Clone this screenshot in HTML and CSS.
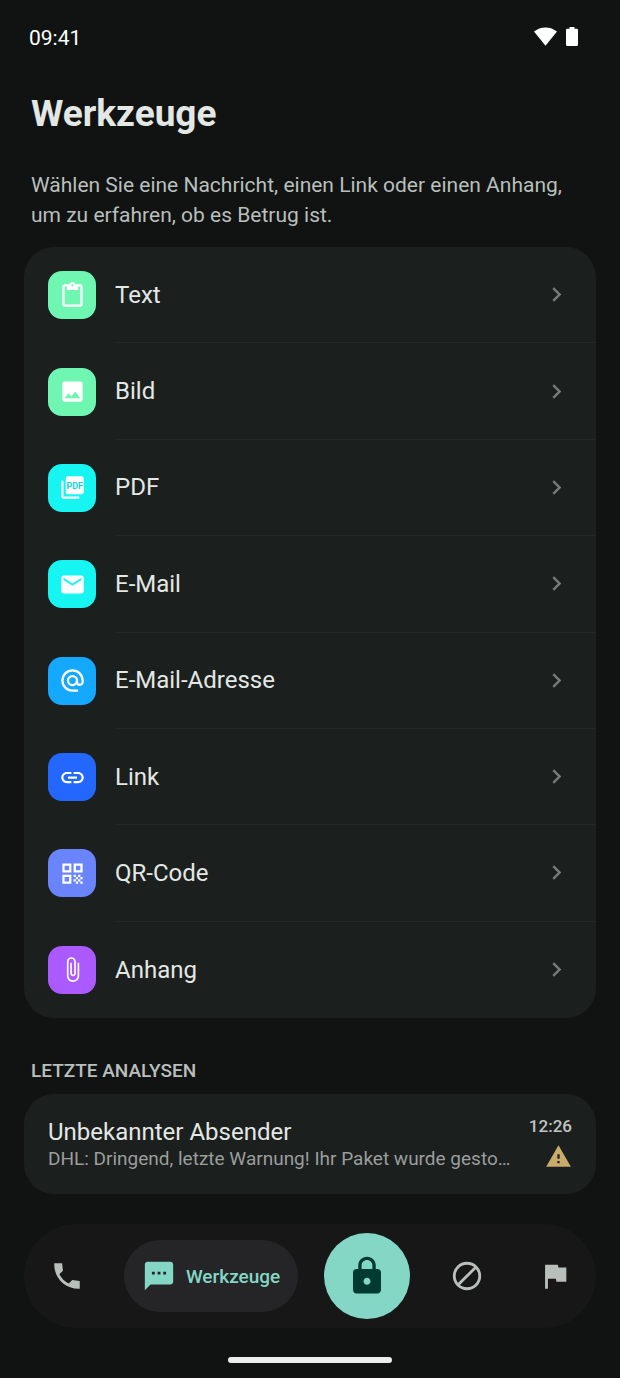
FILE: index.html
```
<!DOCTYPE html>
<html lang="de">
<head>
    <meta charset="UTF-8">
    <meta name="viewport" content="width=device-width, initial-scale=1.0">
    <title>Werkzeuge</title>
    <link rel="stylesheet" href="styles.css">
</head>
<body>
    <header class="status-bar">
        <time>09:41</time>
        <div class="status-icons">
            <svg class="wifi" viewBox="0 0 23 19" aria-hidden="true"><path d="M0 4.6C3.2 1.9 7 .4 11.5.4S19.8 1.9 23 4.6L11.5 18.8z"/></svg>
            <svg class="battery" viewBox="0 0 12 19" aria-hidden="true"><path d="M3.5 0h5v1.8h2.3c.7 0 1.2.5 1.2 1.2v14.8c0 .7-.5 1.2-1.2 1.2H1.2C.5 19 0 18.5 0 17.8V3c0-.7.5-1.2 1.2-1.2h2.3z"/></svg>
        </div>
    </header>

    <main class="content">
        <h1 class="title">Werkzeuge</h1>
        <p class="intro">Wählen Sie eine Nachricht, einen Link oder einen Anhang, um zu erfahren, ob es Betrug ist.</p>

        <!-- Werkzeugliste -->
        <nav class="tool-list" aria-label="Werkzeuge">
            <a href="#text" class="tool">
                <span class="tile mint">
                    <svg viewBox="0 0 24 24" aria-hidden="true"><path d="M19 2h-4.18C14.4.84 13.3 0 12 0S9.6.84 9.18 2H5c-1.1 0-2 .9-2 2v16c0 1.1.9 2 2 2h14c1.1 0 2-.9 2-2V4c0-1.1-.9-2-2-2zm-7 0c.55 0 1 .45 1 1s-.45 1-1 1-1-.45-1-1 .45-1 1-1zm7 18H5V4h2v3h10V4h2v16z"/></svg>
                </span>
                <span class="tool-body">Text <svg class="chevron" viewBox="0 0 24 24" aria-hidden="true"><path d="M10 6 8.59 7.41 13.17 12l-4.58 4.59L10 18l6-6z"/></svg></span>
            </a>
            <a href="#bild" class="tool">
                <span class="tile mint">
                    <svg viewBox="0 0 24 24" aria-hidden="true"><path d="M21 19V5c0-1.1-.9-2-2-2H5c-1.1 0-2 .9-2 2v14c0 1.1.9 2 2 2h14c1.1 0 2-.9 2-2zM8.5 13.5l2.5 3.01L14.5 12l4.5 6H5l3.5-4.5z"/></svg>
                </span>
                <span class="tool-body">Bild <svg class="chevron" viewBox="0 0 24 24" aria-hidden="true"><path d="M10 6 8.59 7.41 13.17 12l-4.58 4.59L10 18l6-6z"/></svg></span>
            </a>
            <a href="#pdf" class="tool">
                <span class="tile cyan">
                    <svg viewBox="0 0 24 24" aria-hidden="true"><path d="M8 2h12a2 2 0 0 1 2 2v12a2 2 0 0 1-2 2H8a2 2 0 0 1-2-2V4a2 2 0 0 1 2-2zM4 6H2v14c0 1.1.9 2 2 2h14v-2H4z"/><text class="pdf-text" x="14" y="13">PDF</text></svg>
                </span>
                <span class="tool-body">PDF <svg class="chevron" viewBox="0 0 24 24" aria-hidden="true"><path d="M10 6 8.59 7.41 13.17 12l-4.58 4.59L10 18l6-6z"/></svg></span>
            </a>
            <a href="#email" class="tool">
                <span class="tile cyan">
                    <svg viewBox="0 0 24 24" aria-hidden="true"><path d="M20 4H4c-1.1 0-1.99.9-1.99 2L2 18c0 1.1.9 2 2 2h16c1.1 0 2-.9 2-2V6c0-1.1-.9-2-2-2zm0 4-8 5-8-5V6l8 5 8-5v2z"/></svg>
                </span>
                <span class="tool-body">E-Mail <svg class="chevron" viewBox="0 0 24 24" aria-hidden="true"><path d="M10 6 8.59 7.41 13.17 12l-4.58 4.59L10 18l6-6z"/></svg></span>
            </a>
            <a href="#adresse" class="tool">
                <span class="tile sky">
                    <svg class="line-icon" viewBox="0 0 24 24" aria-hidden="true"><circle cx="12" cy="12" r="4"/><path d="M17 21h-5a9 9 0 1 1 9-9v1.4a2.5 2.5 0 0 1-5 0V12"/></svg>
                </span>
                <span class="tool-body">E-Mail-Adresse <svg class="chevron" viewBox="0 0 24 24" aria-hidden="true"><path d="M10 6 8.59 7.41 13.17 12l-4.58 4.59L10 18l6-6z"/></svg></span>
            </a>
            <a href="#link" class="tool">
                <span class="tile blue">
                    <svg viewBox="0 0 24 24" aria-hidden="true"><path d="M3.9 12c0-1.71 1.39-3.1 3.1-3.1h4V7H7c-2.76 0-5 2.24-5 5s2.24 5 5 5h4v-1.9H7c-1.71 0-3.1-1.39-3.1-3.1zM8 13h8v-2H8v2zm9-6h-4v1.9h4c1.71 0 3.1 1.39 3.1 3.1s-1.39 3.1-3.1 3.1h-4V17h4c2.76 0 5-2.24 5-5s-2.24-5-5-5z"/></svg>
                </span>
                <span class="tool-body">Link <svg class="chevron" viewBox="0 0 24 24" aria-hidden="true"><path d="M10 6 8.59 7.41 13.17 12l-4.58 4.59L10 18l6-6z"/></svg></span>
            </a>
            <a href="#qr" class="tool">
                <span class="tile indigo">
                    <svg viewBox="0 0 24 24" aria-hidden="true"><path d="M3 11h8V3H3v8zm2-6h4v4H5V5zM3 21h8v-8H3v8zm2-6h4v4H5v-4zM13 3v8h8V3h-8zm6 6h-4V5h4v4zM19 19h2v2h-2zM13 13h2v2h-2zM15 15h2v2h-2zM13 17h2v2h-2zM15 19h2v2h-2zM17 17h2v2h-2zM17 13h2v2h-2zM19 15h2v2h-2z"/></svg>
                </span>
                <span class="tool-body">QR-Code <svg class="chevron" viewBox="0 0 24 24" aria-hidden="true"><path d="M10 6 8.59 7.41 13.17 12l-4.58 4.59L10 18l6-6z"/></svg></span>
            </a>
            <a href="#anhang" class="tool">
                <span class="tile purple">
                    <svg viewBox="0 0 24 24" aria-hidden="true"><path d="M16.5 6v11.5c0 2.21-1.79 4-4 4s-4-1.79-4-4V5c0-1.38 1.12-2.5 2.5-2.5s2.5 1.12 2.5 2.5v10.5c0 .55-.45 1-1 1s-1-.45-1-1V6H10v9.5c0 1.38 1.12 2.5 2.5 2.5s2.5-1.12 2.5-2.5V5c0-2.21-1.79-4-4-4S7 2.79 7 5v12.5c0 3.04 2.46 5.5 5.5 5.5s5.5-2.46 5.5-5.5V6h-1.5z"/></svg>
                </span>
                <span class="tool-body">Anhang <svg class="chevron" viewBox="0 0 24 24" aria-hidden="true"><path d="M10 6 8.59 7.41 13.17 12l-4.58 4.59L10 18l6-6z"/></svg></span>
            </a>
        </nav>

        <!-- Letzte Analysen -->
        <h2 class="section-title">LETZTE ANALYSEN</h2>
        <a href="#analyse" class="analysis">
            <span class="analysis-text">
                <span class="analysis-sender">Unbekannter Absender</span>
                <span class="analysis-preview">DHL: Dringend, letzte Warnung! Ihr Paket wurde gesto…</span>
            </span>
            <span class="analysis-meta">
                <time>12:26</time>
                <svg viewBox="0 0 24 24" role="img" aria-label="Warnung"><path d="M1 21h22L12 2 1 21zm12-3h-2v-2h2v2zm0-4h-2v-4h2v4z"/></svg>
            </span>
        </a>
    </main>

    <!-- Navigation unten -->
    <nav class="bottom-nav" aria-label="Hauptnavigation">
        <button class="nav-btn" aria-label="Anrufe">
            <svg viewBox="0 0 24 24" aria-hidden="true"><path d="M21 15.46l-5.27-.61-2.52 2.52c-2.83-1.44-5.15-3.75-6.59-6.59l2.53-2.53L8.54 3H3.03C2.45 13.18 10.82 21.55 21 20.97v-5.51z"/></svg>
        </button>
        <button class="nav-btn active" aria-current="page">
            <svg viewBox="0 0 24 24" aria-hidden="true"><path d="M20 2H4c-1.1 0-1.99.9-1.99 2L2 22l4-4h14c1.1 0 2-.9 2-2V4c0-1.1-.9-2-2-2zM9 11H7V9h2v2zm4 0h-2V9h2v2zm4 0h-2V9h2v2z"/></svg>
            Werkzeuge
        </button>
        <button class="lock-btn" aria-label="Schutz">
            <svg viewBox="0 0 24 24" aria-hidden="true"><path d="M18 8h-1V6c0-2.76-2.24-5-5-5S7 3.24 7 6v2H6c-1.1 0-2 .9-2 2v10c0 1.1.9 2 2 2h12c1.1 0 2-.9 2-2V10c0-1.1-.9-2-2-2zm-6 9c-1.1 0-2-.9-2-2s.9-2 2-2 2 .9 2 2-.9 2-2 2zm3.1-9H8.9V6c0-1.71 1.39-3.1 3.1-3.1 1.71 0 3.1 1.39 3.1 3.1v2z"/></svg>
        </button>
        <button class="nav-btn" aria-label="Blockieren">
            <svg class="line-icon" viewBox="0 0 24 24" aria-hidden="true"><circle cx="12" cy="12" r="9"/><path d="M5.6 18.4 18.4 5.6"/></svg>
        </button>
        <button class="nav-btn" aria-label="Melden">
            <svg viewBox="0 0 24 24" aria-hidden="true"><path d="M14.4 6 14 4H5v17h2v-7h5.6l.4 2h7V6z"/></svg>
        </button>
    </nav>
    <div class="home-indicator"></div>
</body>
</html>
```
FILE: styles.css
```
* {
    box-sizing: border-box;
}

body {
    margin: 0;
    min-height: 100vh;
    display: flex;
    flex-direction: column;
    background: #101312;
    color: #e4e8e5;
    font-family: Roboto, "Liberation Sans", sans-serif;
}

a {
    color: inherit;
    text-decoration: none;
}

svg {
    display: block;
    flex-shrink: 0;
    fill: currentColor;
}

.line-icon {
    fill: none;
    stroke: currentColor;
    stroke-width: 2;
}

/* Statusleiste */
.status-bar {
    display: flex;
    align-items: center;
    justify-content: space-between;
    height: 76px;
    padding: 0 42px 0 29px;
    color: #fff;
    font-size: 21px;
}

.status-icons {
    display: flex;
    align-items: center;
    gap: 9px;
    padding-bottom: 3px;
}

.wifi {
    width: 23px;
    height: 19px;
}

.battery {
    width: 12px;
    height: 19px;
}

.content {
    flex: 1;
    display: flex;
    flex-direction: column;
    padding: 0 24px;
}

.title {
    margin: 12px 7px 30px;
    font-size: 37px;
    font-weight: 700;
    line-height: 52px;
}

.intro {
    margin: 0 7px 17px;
    color: #b9bfbb;
    font-size: 21px;
    line-height: 30px;
}

/* Werkzeugliste */
.tool-list {
    flex: 1;
    display: flex;
    flex-direction: column;
    overflow: hidden;
    border-radius: 30px;
    background: #1b1f1e;
}

.tool {
    flex: 1;
    display: flex;
    align-items: center;
    gap: 19px;
    min-height: 80px;
    padding-left: 24px;
}

.tile {
    display: flex;
    align-items: center;
    justify-content: center;
    width: 48px;
    height: 48px;
    border-radius: 14px;
    color: #fff;
}

.tile svg {
    width: 27px;
    height: 27px;
}

.mint {
    background: #6ff7b2;
}

.cyan {
    background: #17f5f3;
}

.sky {
    background: #14a8ff;
}

.blue {
    background: #2467ff;
}

.indigo {
    background: #6a84fc;
}

.purple {
    background: #ab5aff;
}

.pdf-text {
    fill: #17d2da;
    font-size: 8px;
    font-weight: 700;
    text-anchor: middle;
}

.tool-body {
    flex: 1;
    align-self: stretch;
    display: flex;
    align-items: center;
    justify-content: space-between;
    padding-right: 25px;
    border-bottom: 1px solid #232726;
    font-size: 24px;
}

.tool:last-child .tool-body {
    border-bottom: none;
}

.chevron {
    width: 29px;
    height: 29px;
    color: #777b79;
}

/* Letzte Analysen */
.section-title {
    margin: 41px 7px 11px;
    color: #b9bfbb;
    font-size: 19px;
    font-weight: 500;
    line-height: 24px;
}

.analysis {
    display: flex;
    gap: 12px;
    padding: 24px;
    border-radius: 30px;
    background: #1b1f1e;
}

.analysis-text {
    flex: 1;
    display: flex;
    flex-direction: column;
    min-width: 0;
}

.analysis-sender {
    font-size: 24px;
    line-height: 29px;
}

.analysis-preview {
    overflow: hidden;
    color: #9a9e9c;
    font-size: 19px;
    line-height: 23px;
    text-overflow: ellipsis;
    white-space: nowrap;
}

.analysis-meta {
    display: flex;
    flex-direction: column;
    align-items: flex-end;
    gap: 9px;
    color: #c0c5c2;
    font-size: 17px;
    font-weight: 500;
    line-height: 16px;
}

.analysis-meta svg {
    width: 27px;
    height: 27px;
    color: #c9ab6c;
}

/* Navigation unten */
.bottom-nav {
    display: flex;
    align-items: center;
    justify-content: space-between;
    height: 104px;
    margin: 30px 24px 0;
    padding: 0 10px 0 12px;
    border-radius: 52px;
    background: #171717;
}

.nav-btn {
    display: flex;
    align-items: center;
    gap: 10px;
    padding: 14px;
    border: none;
    background: none;
    color: #b9bfbb;
    font: 500 19px Roboto, "Liberation Sans", sans-serif;
    cursor: pointer;
}

.nav-btn svg {
    width: 34px;
    height: 34px;
}

.nav-btn.active {
    height: 72px;
    padding: 0 18px;
    border-radius: 36px;
    background: #252528;
    color: #84d6c5;
}

.lock-btn {
    display: flex;
    align-items: center;
    justify-content: center;
    width: 86px;
    height: 86px;
    padding: 0;
    border: none;
    border-radius: 50%;
    background: #84d6c5;
    color: #003a31;
    cursor: pointer;
}

.lock-btn svg {
    width: 42px;
    height: 42px;
}

.home-indicator {
    width: 164px;
    height: 6px;
    margin: 29px auto 15px;
    border-radius: 3px;
    background: #eceeed;
}
```
